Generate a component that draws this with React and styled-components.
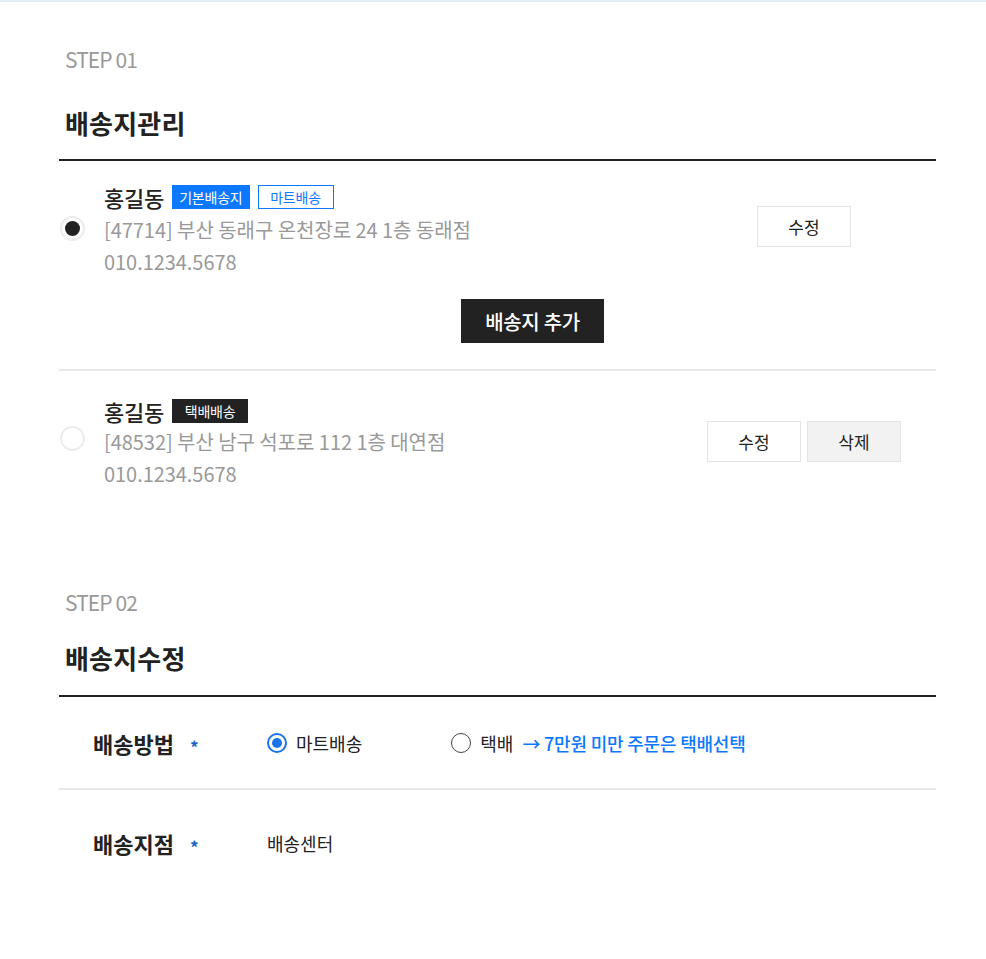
import styled, { createGlobalStyle } from "styled-components";

const GlobalStyle = createGlobalStyle`
  html, body {
    margin: 0;
    padding: 0;
    background: #ffffff;
  }
  body {
    border-top: 2px solid #e3edf8;
    font-family: "Noto Sans CJK KR", "Noto Sans", sans-serif;
    color: #222222;
  }
  * {
    box-sizing: border-box;
  }
`;

const Page = styled.div`
  width: 877px;
  margin-left: 59px;
  padding-bottom: 60px;
`;

const Section = styled.section`
  padding-top: ${({ $top }) => $top}px;
`;

const Step = styled.div`
  padding-left: 6px;
  font-size: 21px;
  line-height: 28px;
  letter-spacing: -0.9px;
  color: #999999;
`;

const Title = styled.h2`
  margin: ${({ $gap }) => $gap}px 0 0;
  padding: 0 0 ${({ $bottom }) => $bottom}px 6px;
  font-size: 26px;
  line-height: 34px;
  font-weight: 700;
  letter-spacing: 0.2px;
  color: #222222;
  border-bottom: 2px solid #222222;
`;

const Card = styled.div`
  padding: ${({ $pad }) => $pad};
  border-bottom: ${({ $last }) => ($last ? "none" : "2px solid #e8e8e8")};
`;

const CardRow = styled.div`
  display: flex;
  align-items: center;
`;

const Radio = styled.span`
  flex: none;
  width: 25px;
  height: 25px;
  margin: ${({ $shift }) => $shift}px 0 0 1px;
  border: 2px solid #ececec;
  border-radius: 50%;
  display: flex;
  align-items: center;
  justify-content: center;

  &::after {
    content: "";
    width: 15px;
    height: 15px;
    border-radius: 50%;
    background: ${({ $checked }) => ($checked ? "#222222" : "transparent")};
  }
`;

const Info = styled.div`
  flex: 1;
  margin-left: 19px;
`;

const NameLine = styled.div`
  display: flex;
  align-items: center;
  gap: 8px;
  height: 30px;
  margin-top: ${({ $shift }) => $shift}px;
  margin-bottom: ${({ $shift }) => -$shift}px;
`;

const Name = styled.span`
  font-size: 22px;
  font-weight: 500;
  letter-spacing: -0.2px;
  color: #222222;
`;

const Badge = styled.span`
  min-width: 76px;
  height: 24px;
  padding: 0 6px;
  display: inline-flex;
  align-items: center;
  justify-content: center;
  font-size: 14px;
  letter-spacing: -0.2px;
  color: ${({ $variant }) => ($variant === "outline" ? "#0b78ff" : "#ffffff")};
  background: ${({ $variant }) =>
    $variant === "blue" ? "#0b78ff" : $variant === "dark" ? "#222222" : "#ffffff"};
  border: 1px solid
    ${({ $variant }) => ($variant === "dark" ? "#222222" : "#0b78ff")};
`;

const Detail = styled.div`
  font-size: 20px;
  line-height: 32px;
  letter-spacing: -0.05px;
  color: #999999;
`;

const Actions = styled.div`
  flex: none;
  width: 264px;
  display: flex;
  justify-content: center;
  gap: 6px;
  margin-top: ${({ $shift }) => $shift}px;
`;

const SmallButton = styled.button`
  width: 94px;
  height: 41px;
  border: 1px solid #e4e4e4;
  background: ${({ $gray }) => ($gray ? "#f2f2f2" : "#ffffff")};
  font-family: inherit;
  font-size: 17px;
  color: #222222;
  cursor: pointer;
`;

const AddRow = styled.div`
  display: flex;
  justify-content: center;
  padding-left: 70px;
  margin-top: 21px;
`;

const AddButton = styled.button`
  width: 143px;
  height: 44px;
  border: none;
  background: #222222;
  color: #ffffff;
  font-family: inherit;
  font-size: 20px;
  font-weight: 500;
  letter-spacing: -0.3px;
  cursor: pointer;
`;

const FormRow = styled.div`
  display: flex;
  align-items: center;
  padding: ${({ $pad }) => $pad};
  border-bottom: ${({ $last }) => ($last ? "none" : "2px solid #e8e8e8")};
`;

const Label = styled.div`
  width: 134px;
  padding-left: 34px;
  display: flex;
  align-items: center;
  font-size: 22px;
  font-weight: 700;
  color: #222222;
  white-space: nowrap;
`;

const Required = styled.span`
  margin-left: 16px;
  font-size: 17px;
  font-weight: 700;
  color: #1565c8;
  transform: translateY(3px);
`;

const Field = styled.div`
  margin-left: 74px;
  display: flex;
  align-items: center;
`;

const Option = styled.label`
  display: flex;
  align-items: center;
  margin-right: ${({ $gap }) => $gap || 0}px;
  font-size: 18px;
  color: #222222;
  cursor: pointer;
`;

const FormRadio = styled.span`
  width: 20px;
  height: 20px;
  margin-right: 9px;
  border-radius: 50%;
  border: ${({ $checked }) => ($checked ? "2px solid #1a73e8" : "1px solid #444444")};
  display: flex;
  align-items: center;
  justify-content: center;

  &::after {
    content: "";
    width: 10px;
    height: 10px;
    border-radius: 50%;
    background: ${({ $checked }) => ($checked ? "#1a73e8" : "transparent")};
  }
`;

const Notice = styled.span`
  margin-left: 9px;
  font-size: 18px;
  font-weight: 500;
  letter-spacing: -0.2px;
  color: #0b78ff;
`;

const Value = styled.span`
  font-size: 18px;
  color: #222222;
`;

const addresses = [
  {
    name: "홍길동",
    badges: [
      { label: "기본배송지", variant: "blue" },
      { label: "마트배송", variant: "outline" },
    ],
    address: "[47714] 부산 동래구 온천장로 24 1층 동래점",
    phone: "010.1234.5678",
    checked: true,
    actions: ["수정"],
  },
  {
    name: "홍길동",
    badges: [{ label: "택배배송", variant: "dark" }],
    address: "[48532] 부산 남구 석포로 112 1층 대연점",
    phone: "010.1234.5678",
    checked: false,
    actions: ["수정", "삭제"],
  },
];

export default function App() {
  return (
    <Page>
      <GlobalStyle />
      <Section $top={43}>
        <Step>STEP 01</Step>
        <Title $gap={33} $bottom={19}>
          배송지관리
        </Title>

        {addresses.map((item, i) => (
          <Card
            key={i}
            $last={i === addresses.length - 1}
            $pad={i === 0 ? "23px 0 26px" : "25px 0 0"}
          >
            <CardRow>
              <Radio $checked={item.checked} $shift={i === 0 ? -6 : -10} />
              <Info>
                <NameLine $shift={i === 0 ? -2 : 0}>
                  <Name>{item.name}</Name>
                  {item.badges.map((b) => (
                    <Badge key={b.label} $variant={b.variant}>
                      {b.label}
                    </Badge>
                  ))}
                </NameLine>
                <Detail>{item.address}</Detail>
                <Detail>{item.phone}</Detail>
              </Info>
              <Actions $shift={i === 0 ? -10 : -3}>
                {item.actions.map((a) => (
                  <SmallButton key={a} $gray={a === "삭제"}>
                    {a}
                  </SmallButton>
                ))}
              </Actions>
            </CardRow>
            {i === 0 && (
              <AddRow>
                <AddButton>배송지 추가</AddButton>
              </AddRow>
            )}
          </Card>
        ))}
      </Section>

      <Section $top={98}>
        <Step>STEP 02</Step>
        <Title $gap={25} $bottom={20}>
          배송지수정
        </Title>

        <FormRow $pad="30px 0 29px">
          <Label>
            배송방법<Required>*</Required>
          </Label>
          <Field>
            <Option $gap={89}>
              <FormRadio $checked />
              마트배송
            </Option>
            <Option>
              <FormRadio />
              택배
            </Option>
            <Notice>→ 7만원 미만 주문은 택배선택</Notice>
          </Field>
        </FormRow>

        <FormRow $last $pad="37px 0 20px">
          <Label>
            배송지점<Required>*</Required>
          </Label>
          <Field>
            <Value>배송센터</Value>
          </Field>
        </FormRow>
      </Section>
    </Page>
  );
}
